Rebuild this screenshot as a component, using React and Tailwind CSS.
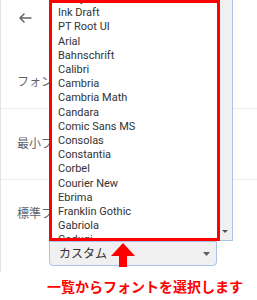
import React from "react";

const fonts = [
  "Meiryo UI",
  "Ink Draft",
  "PT Root UI",
  "Arial",
  "Bahnschrift",
  "Calibri",
  "Cambria",
  "Cambria Math",
  "Candara",
  "Comic Sans MS",
  "Consolas",
  "Constantia",
  "Corbel",
  "Courier New",
  "Ebrima",
  "Franklin Gothic",
  "Gabriola",
  "Gadugi",
];

export default function App() {
  return (
    <div className="relative w-[257px] h-[300px] overflow-hidden bg-white font-['Roboto','Noto_Sans_CJK_JP',sans-serif]">
      {/* settings card */}
      <div className="h-[272px] border-l border-[#e3e3e3] flex flex-col">
        <div className="h-[56px] pl-[17px] pt-[13px]">
          <svg width="14" height="10" viewBox="0 0 14 10" fill="none">
            <path
              d="M13 5H2M6 1L2 5L6 9"
              stroke="#5f6368"
              strokeWidth="1.5"
              strokeLinecap="round"
              strokeLinejoin="round"
            />
          </svg>
        </div>
        <div className="h-[53px] flex items-center pl-[16px] border-b border-[#ececec] text-[12px] text-[#5f6368] whitespace-nowrap">
          フォントサイズ
        </div>
        <div className="h-[71px] flex items-center pl-[16px] border-b border-[#ececec] text-[12px] text-[#5f6368] whitespace-nowrap">
          最小フォントサイズ
        </div>
        <div className="flex flex-col">
          <div className="pl-[16px] pt-[26px] text-[12px] leading-[16px] text-[#5f6368] whitespace-nowrap">
            標準フォント
          </div>
          <div className="ml-[48px] mt-[19px] w-[168px] h-[25px] flex items-center justify-between pl-[9px] pr-[6px] bg-[#f0f0f0] border border-[#a9c3ea] rounded-b-[4px] text-[12px] text-[#333]">
            <span>カスタム</span>
            <svg width="7" height="4" viewBox="0 0 7 4">
              <path d="M0 0H7L3.5 4Z" fill="#606060" />
            </svg>
          </div>
        </div>
      </div>

      {/* caption */}
      <div className="pl-[47px] pt-[7px] text-[14px] leading-[16px] font-bold text-[#ff0000] whitespace-nowrap">
        一覧からフォントを選択します
      </div>

      {/* open dropdown list */}
      <div className="absolute left-[49px] top-0 w-[184px] h-[241px] flex bg-white border-r border-b border-[#a9c3ea]">
        <div className="flex-1 overflow-hidden">
          <div className="-mt-[8px] pl-[9px] text-[11px] leading-[14.2px] text-[#333]">
            {fonts.map((f) => (
              <div key={f} className="whitespace-nowrap">
                {f}
              </div>
            ))}
          </div>
        </div>
        <div className="w-[12px] bg-[#f0f0f0] flex flex-col justify-end items-start pl-[2px] pb-[7px]">
          <svg width="6" height="3" viewBox="0 0 6 3">
            <path d="M0 0H6L3 3Z" fill="#505050" />
          </svg>
        </div>
      </div>

      {/* red highlight frame */}
      <div className="absolute left-[49px] top-0 w-[171px] h-[241px] border-[3px] border-[#ff0000]" />

      {/* red arrow */}
      <svg
        className="absolute left-[110px] top-[243px]"
        width="26"
        height="24"
        viewBox="0 0 26 24"
      >
        <path d="M13 0L1 13H9V24H17V13H25Z" fill="#ff0000" />
      </svg>
    </div>
  );
}
